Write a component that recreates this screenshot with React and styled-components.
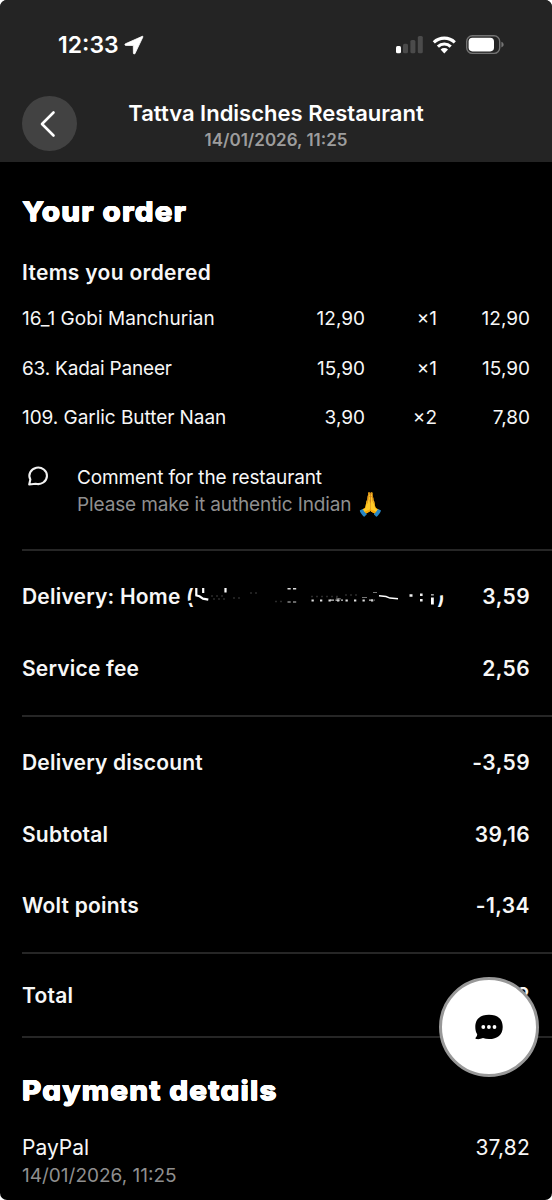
import React from "react";
import styled, { createGlobalStyle } from "styled-components";

const orderItems = [
  { name: "16_1 Gobi Manchurian", price: "12,90", qty: "×1", sum: "12,90", track: "0.05px" },
  { name: "63. Kadai Paneer", price: "15,90", qty: "×1", sum: "15,90", track: "-0.2px" },
  { name: "109. Garlic Butter Naan", price: "3,90", qty: "×2", sum: "7,80" },
];

function StatusIcons() {
  return (
    <svg width="110" height="22" viewBox="395 34 110 22">
      <rect x="396" y="46" width="5" height="7.3" rx="1.5" fill="#fff" />
      <rect x="403" y="43.7" width="5" height="9.6" rx="1.5" fill="#4b4b4b" />
      <rect x="410.4" y="40" width="5" height="13.3" rx="1.5" fill="#4b4b4b" />
      <rect x="417.8" y="36" width="5" height="17.3" rx="1.5" fill="#4b4b4b" />
      <g fill="none" stroke="#fff" strokeWidth="3.1">
        <path d="M433.8 42.3a15.2 15.2 0 0 1 21 0" />
        <path d="M437.9 46.6a9.2 9.2 0 0 1 12.8 0" />
      </g>
      <path d="M444.3 53.4l-3.7-3.9a5.4 5.4 0 0 1 7.4 0z" fill="#fff" />
      <rect x="466.7" y="35.8" width="33" height="17.6" rx="5.6" fill="none" stroke="#747474" strokeWidth="1.4" />
      <rect x="468.6" y="37.8" width="25.4" height="13.6" rx="3.8" fill="#fff" />
      <path d="M501.4 41.8c3 1 3 4.6 0 5.6z" fill="#747474" />
    </svg>
  );
}

function LocationIcon() {
  return (
    <svg width="20" height="20" viewBox="0 0 20 20">
      <path
        d="M18.3 1.3L1.4 8.8c-.9.5-.6 1.5.3 1.6l7.6.1.1 7.7c.1 1 1.2 1.2 1.6.3L18.9 2c.2-.5-.1-.9-.6-.7z"
        fill="#fff"
        stroke="#fff"
        strokeWidth="0.8"
      />
    </svg>
  );
}

// leftovers of the scratched out street name
function HiddenAddress() {
  return (
    <Scraps width="243" height="26" viewBox="195 584 243 26">
      <path d="M187 601.6l7-2v3l-7 1z" fill="#000" />
      <g fill="none" stroke="#fff" strokeWidth="2.2">
        <path d="M197.3 588v7.5M204.2 588v5M226.5 588v4.5" />
        <path d="M196.5 595.3l4 1 3.5 2.3 5.3 1" />
        <path d="M380 595.8l7 .8 4 1.5 8 .7" strokeWidth="1.5" />
      </g>
      <path d="M288.5 588.8h3.2M294 588.8h3.2" stroke="#ddd" strokeWidth="1.6" />
      <path d="M288.5 602h3.2M294 602h3.2" stroke="#888" strokeWidth="1.4" />
      <path d="M312.5 600.4h64" stroke="#ddd" strokeWidth="2" strokeDasharray="2.3 6.2" />
      <path d="M331 600.2h13M370 600.2h6" stroke="#ccc" strokeWidth="1.3" strokeDasharray="4 1.5" />
      <path d="M337 598l5 1M363 597.5h5M374 592.5h4" stroke="#777" strokeWidth="1.2" />
      <path
        d="M212 596h12M214 599h14M234 598h8M251 593h9M276 601.5h10M312 596.5h30M346 595h12"
        stroke="#2b2b2b"
        strokeWidth="1.3"
        strokeDasharray="2 3"
      />
      <path d="M410.5 595.5h3M421 594.8h2.6M421 600.3h2.6" stroke="#eee" strokeWidth="2.4" />
      <path d="M432 594.8h2.8" stroke="#aaa" strokeWidth="1.5" />
      <path d="M433.4 597.5v7" stroke="#fff" strokeWidth="2.8" />
      <path d="M436 586h11v8.5l-11 2z" fill="#000" />
    </Scraps>
  );
}

function App() {
  return (
    <Screen>
      <GlobalStyle />
      <Header>
        <StatusBar>
          <Clock>
            12:33
            <LocationIcon />
          </Clock>
          <StatusIcons />
        </StatusBar>
        <NavBar>
          <BackButton>
            <svg width="20" height="28" viewBox="0 0 20 28">
              <path
                d="M15.5 2.5L4 14l11.500 11.500"
                fill="none"
                stroke="#fff"
                strokeWidth="2.6"
                strokeLinecap="round"
                strokeLinejoin="round"
              />
            </svg>
          </BackButton>
          <NavText>
            <NavTitle>Tattva Indisches Restaurant</NavTitle>
            <NavDate>14/01/2026, 11:25</NavDate>
          </NavText>
        </NavBar>
      </Header>

      <Heading $top="32px">Your order</Heading>
      <SubHeading>Items you ordered</SubHeading>
      {orderItems.map((item) => (
        <ItemRow key={item.name}>
          <ItemName $track={item.track}>{item.name}</ItemName>
          <Amount>{item.price}</Amount>
          <Amount>{item.qty}</Amount>
          <Amount>{item.sum}</Amount>
        </ItemRow>
      ))}
      <Comment>
        <svg width="23" height="23" viewBox="0 0 22 22">
          <path
            d="M2.1 18.6L3.2 13.9A8.4 7.9 0 1 1 8.3 17.9z"
            fill="none"
            stroke="#f2f2f2"
            strokeWidth="2"
            strokeLinejoin="round"
          />
        </svg>
        <div>
          <CommentTitle>Comment for the restaurant</CommentTitle>
          <CommentText>
            Please make it authentic Indian <Emoji>🙏</Emoji>
          </CommentText>
        </div>
      </Comment>

      <Section>
        <FeeRow>
          <FeeLabel>
            Delivery: Home (<HiddenAddress />)
          </FeeLabel>
          <FeeValue>3,59</FeeValue>
        </FeeRow>
        <FeeRow>
          <FeeLabel>Service fee</FeeLabel>
          <FeeValue>2,56</FeeValue>
        </FeeRow>
      </Section>
      <Section>
        <FeeRow>
          <FeeLabel>Delivery discount</FeeLabel>
          <FeeValue>-3,59</FeeValue>
        </FeeRow>
        <FeeRow>
          <FeeLabel>Subtotal</FeeLabel>
          <FeeValue>39,16</FeeValue>
        </FeeRow>
        <FeeRow>
          <FeeLabel>Wolt points</FeeLabel>
          <FeeValue>-1,34</FeeValue>
        </FeeRow>
      </Section>
      <TotalSection>
        <FeeRow>
          <FeeLabel>Total</FeeLabel>
          <FeeValue>37,82</FeeValue>
        </FeeRow>
      </TotalSection>

      <Heading $top="35px">Payment details</Heading>
      <Payment>
        <div>
          <PaymentName>PayPal</PaymentName>
          <PaymentDate>14/01/2026, 11:25</PaymentDate>
        </div>
        <PaymentSum>37,82</PaymentSum>
      </Payment>

      <ChatButton>
        <svg width="30" height="28" viewBox="0 0 30 28">
          <path
            d="M15 1.7c8.5 0 13.7 4.3 13.7 12.2S23.5 26 15 26c-2.3 0-4.3-.3-6-.9-2 .9-4.6 1.3-6.7.9-1-.2-1.1-1-.5-1.6.9-.9 1.4-2 1.4-3.1C1.9 19.3 1.3 16.8 1.3 13.9 1.3 6 6.5 1.7 15 1.7z"
            fill="#000"
          />
          <circle cx="9.3" cy="14" r="1.9" fill="#fff" />
          <circle cx="14.9" cy="14" r="1.9" fill="#fff" />
          <circle cx="20.5" cy="14" r="1.9" fill="#fff" />
        </svg>
      </ChatButton>
    </Screen>
  );
}

const GlobalStyle = createGlobalStyle`
  body {
    margin: 0;
    background: #fff;
  }
  * {
    box-sizing: border-box;
  }
  svg {
    display: block;
    flex-shrink: 0;
  }
`;

const Screen = styled.div`
  position: relative;
  width: 552px;
  height: 1200px;
  overflow: hidden;
  border-radius: 7px;
  background: #000;
  color: #f7f7f7;
  font-family: Inter, "Liberation Sans", sans-serif;
  white-space: nowrap;
`;

const Header = styled.div`
  height: 162px;
  background: #242424;
`;

const StatusBar = styled.div`
  display: flex;
  align-items: center;
  justify-content: space-between;
  height: 90px;
  padding: 0 47px 0 58px;
`;

const Clock = styled.div`
  display: flex;
  align-items: center;
  gap: 5px;
  color: #fff;
  font-size: 23px;
  font-weight: 600;
`;

const NavBar = styled.div`
  display: grid;
  grid-template-columns: 55px 1fr 55px;
  padding: 6px 22px 0;
`;

const BackButton = styled.button`
  display: flex;
  align-items: center;
  justify-content: center;
  width: 55px;
  height: 55px;
  padding: 0 3px 0 0;
  border: none;
  border-radius: 50%;
  background: #424242;
`;

const NavText = styled.div`
  padding-top: 4px;
  text-align: center;
  line-height: 27px;
`;

const NavTitle = styled.div`
  color: #fff;
  font-size: 22px;
  font-weight: 600;
`;

const NavDate = styled.div`
  color: #9d9d9d;
  font-size: 17px;
  font-weight: 600;
`;

const Heading = styled.h1`
  width: max-content;
  margin: ${(props) => props.$top} 0 0 22px;
  color: #fff;
  font-size: 27px;
  font-weight: 800;
  line-height: 36px;
  letter-spacing: 1px;
  font-feature-settings: "cv11" 1;
  text-shadow: 0.4px 0 #fff, -0.4px 0 #fff, 0 0.5px #fff, 0 -0.5px #fff;
  transform: scaleX(1.1);
  transform-origin: left;
`;

const SubHeading = styled.h2`
  margin: 28px 22px 6px;
  font-size: 21px;
  font-weight: 600;
  line-height: 30px;
  letter-spacing: 0.3px;
`;

const ItemRow = styled.div`
  display: grid;
  grid-template-columns: 1fr 80px 72px 93px;
  align-items: center;
  height: 49.4px;
  padding: 0 22px;
  font-size: 19px;
`;

const ItemName = styled.div`
  letter-spacing: ${(props) => props.$track || "-0.05px"};
`;

const Amount = styled.div`
  text-align: right;
`;

const Comment = styled.div`
  display: flex;
  gap: 27px;
  height: 107px;
  padding: 22.3px 22px 0 27px;
  font-size: 19px;
  line-height: 27px;
  letter-spacing: -0.12px;

  svg {
    margin-top: 1px;
  }
`;

const CommentTitle = styled.div`
  height: 27px;
`;

const CommentText = styled.div`
  height: 27px;
  color: #8f8f8f;
`;

const Emoji = styled.span`
  display: inline-block;
  margin-left: -1px;
  font-size: 23px;
  line-height: 20px;
  vertical-align: -1px;
`;

const Section = styled.div`
  padding: 10px 22px 11px 0;
  margin-left: 22px;
  border-top: 2px solid #262626;
`;

const TotalSection = styled(Section)`
  height: 86px;
  padding: 6px 22px 0 0;
  border-bottom: 2px solid #262626;
`;

const FeeRow = styled.div`
  display: flex;
  align-items: center;
  justify-content: space-between;
  height: 71.4px;
  font-size: 21px;
  font-weight: 600;
`;

const FeeLabel = styled.div`
  display: flex;
  align-items: center;
  letter-spacing: 0.2px;
`;

const FeeValue = styled.div`
  letter-spacing: 0.4px;
`;

const Scraps = styled.svg`
  position: relative;
  overflow: visible;
`;

const Payment = styled.div`
  display: flex;
  justify-content: space-between;
  margin-top: 25px;
  padding: 0 22px;
  line-height: 28px;
`;

const PaymentName = styled.div`
  font-size: 21px;
`;

const PaymentDate = styled.div`
  color: #8f8f8f;
  font-size: 19px;
`;

const PaymentSum = styled.div`
  font-size: 21px;
  letter-spacing: 0.2px;
`;

const ChatButton = styled.button`
  position: absolute;
  right: 13px;
  bottom: 123px;
  display: flex;
  align-items: center;
  justify-content: center;
  width: 100px;
  height: 100px;
  padding: 0;
  border: 3px solid #989898;
  border-radius: 50%;
  background: #fff;
`;

export default App;
